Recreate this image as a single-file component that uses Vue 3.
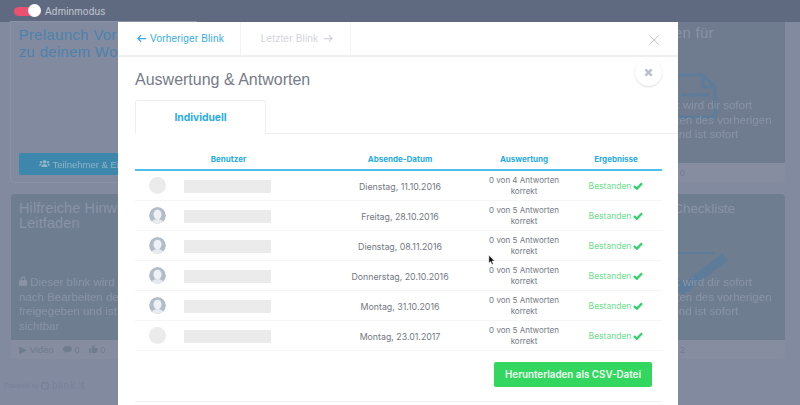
<template>
  <div class="page">
    <div class="backdrop">
      <header class="topbar">
        <span class="toggle"><span class="toggle__knob"></span></span>
        <span class="topbar__label">Adminmodus</span>
      </header>

      <main class="board">
        <article class="card card--plain">
          <h2 class="card__title card__title--blue">Prelaunch Vorbereitung<br />zu deinem Workshop</h2>
          <button type="button" class="card__cta">
            <svg viewBox="0 0 16 12" width="11" height="9" fill="currentColor"><circle cx="8" cy="3.4" r="2.6" /><circle cx="3" cy="4" r="1.8" /><circle cx="13" cy="4" r="1.8" /><path d="M3.6 11c0-3 2-4.4 4.4-4.4s4.4 1.4 4.4 4.4zM0 9.4C0 7.600 1.200 6.500 3 6.500l.8.2C2.800 7.600 2.500 8.500 2.400 9.400zM16 9.400c0-1.800-1.200-2.900-3-2.900l-.8.2c1 .9 1.300 1.800 1.400 2.700z" /></svg>
            Teilnehmer &amp; Einstellungen
          </button>
        </article>
        <article v-for="n in 2" :key="n" class="card card--image"><div class="card__media"></div><div class="card__foot"></div></article>
        <article class="card card--image">
          <div class="card__media">
            <h2 class="card__title">Zielgruppen für</h2>
            <svg class="card__art card__art--doc" viewBox="0 0 44 46" fill="none" stroke="#5c7c9a" stroke-width="3">
              <path d="M2 2h28l12 12v30H2zM30 2v12h12M8 22h28" />
            </svg>
            <p class="card__text card__text--top">
              <svg viewBox="0 0 10 12" width="8" height="10" fill="currentColor"><path d="M1 5h1V3.500a3 3 0 0 1 6 0V5h1a1 1 0 0 1 1 1v5a1 1 0 0 1-1 1H1a1 1 0 0 1-1-1V6a1 1 0 0 1 1-1zm2.500 0h3V3.500a1.500 1.500 0 0 0-3 0z" /></svg>
              Dieser blink wird dir sofort<br />nach Bearbeiten des vorherigen<br />freigegeben und ist sofort
            </p>
          </div>
          <div class="card__foot card__foot--meta"><span class="meta__push">0</span></div>
        </article>

        <article class="card card--image">
          <div class="card__media card__media--tall">
            <h2 class="card__title card__title--left">Hilfreiche Hinweise<br />Leitfaden</h2>
            <p class="card__text">
              <svg viewBox="0 0 10 12" width="8" height="10" fill="currentColor"><path d="M1 5h1V3.500a3 3 0 0 1 6 0V5h1a1 1 0 0 1 1 1v5a1 1 0 0 1-1 1H1a1 1 0 0 1-1-1V6a1 1 0 0 1 1-1zm2.500 0h3V3.500a1.500 1.500 0 0 0-3 0z" /></svg>
              Dieser blink wird dir sofort<br />nach Bearbeiten des vorherigen<br />freigegeben und ist sofort<br />sichtbar
            </p>
          </div>
          <div class="card__foot card__foot--meta">
            <span>▶ Video</span>
            <span>
              <svg viewBox="0 0 10 8" width="9" height="7" fill="currentColor"><ellipse cx="5" cy="3.500" rx="5" ry="3.500" /><path d="M2 5L1 8l3-2z" /></svg>
              0
            </span>
            <span>
              <svg viewBox="0 0 10 9" width="9" height="8" fill="currentColor"><path d="M0 4h2v5H0zM3 4l2-4c1 0 1.500 .7 1.200 1.700L5.800 3.500H9c.7 0 1 .6 .8 1.200L8.600 8.400c-.1 .4-.4 .6-.8 .6H3z" /></svg>
              0
            </span>
          </div>
        </article>
        <article v-for="n in 2" :key="`mid-${n}`" class="card card--image"><div class="card__media card__media--tall"></div><div class="card__foot"></div></article>
        <article class="card card--image">
          <div class="card__media card__media--tall">
            <h2 class="card__title card__title--right">Deine 100 Checkliste</h2>
            <svg class="card__art card__art--check" viewBox="0 0 72 44" fill="none" stroke="#5c7c9a">
              <path d="M12 2h46" stroke-width="2" />
              <path d="M8 20l18 18L68 6" stroke-width="9" />
            </svg>
            <p class="card__text">
              <svg viewBox="0 0 10 12" width="8" height="10" fill="currentColor"><path d="M1 5h1V3.500a3 3 0 0 1 6 0V5h1a1 1 0 0 1 1 1v5a1 1 0 0 1-1 1H1a1 1 0 0 1-1-1V6a1 1 0 0 1 1-1zm2.500 0h3V3.500a1.500 1.500 0 0 0-3 0z" /></svg>
              Dieser blink wird dir sofort<br />nach Bearbeiten des vorherigen<br />freigegeben und ist sofort
            </p>
          </div>
          <div class="card__foot card__foot--meta"><span class="meta__push">2</span></div>
        </article>
      </main>

      <footer class="powered">
        Powered by
        <svg viewBox="0 0 10 10" width="8" height="8" fill="none" stroke="currentColor" stroke-width="2"><rect x="1" y="1" width="8" height="8" rx="2" /></svg>
        <b>blink.it</b>
      </footer>
    </div>

    <section class="modal" role="dialog" aria-modal="true">
      <nav class="modal__nav">
        <a class="nav-link nav-link--active">
          <svg viewBox="0 0 12 10" width="10" height="9" fill="none" stroke="currentColor" stroke-width="1.500"><path d="M11 5H1.500M5 1L1 5l4 4" /></svg>
          Vorheriger Blink
        </a>
        <a class="nav-link">
          Letzter Blink
          <svg viewBox="0 0 12 10" width="10" height="9" fill="none" stroke="currentColor" stroke-width="1.500"><path d="M1 5h9.500M7 1l4 4-4 4" /></svg>
        </a>
        <svg class="modal__close" viewBox="0 0 10 10" width="10" height="10" fill="none" stroke="currentColor" stroke-width="0.900"><path d="M.5.5l9 9M9.500.5l-9 9" /></svg>
      </nav>

      <div class="modal__body">
        <h1 class="modal__title">Auswertung &amp; Antworten</h1>
        <button type="button" class="round-close" aria-label="Schließen">
          <svg viewBox="0 0 10 10" width="9" height="9" fill="none" stroke="currentColor" stroke-width="3"><path d="M1.500 1.500l7 7M8.500 1.500l-7 7" /></svg>
        </button>

        <div class="tabs"><div class="tab">Individuell</div></div>

        <div class="results">
          <div class="results__row results__row--head">
            <span>Benutzer</span>
            <span>Absende-Datum</span>
            <span>Auswertung</span>
            <span>Ergebnisse</span>
          </div>
          <div v-for="row in rows" :key="row.date" class="results__row">
            <div class="user">
              <span v-if="!row.photo" class="avatar avatar--empty"></span>
              <svg v-else class="avatar" viewBox="0 0 17 17">
                <circle cx="8.500" cy="8.500" r="8.500" fill="#b3bdc8" />
                <ellipse cx="8.500" cy="7.500" rx="4" ry="4.800" fill="#eef0f3" />
                <path d="M2.800 15c1-2.300 3.300-3 5.700-3s4.700.7 5.700 3a8.500 8.500 0 0 1-11.400 0z" fill="#e7eaee" />
              </svg>
              <span class="user__name"></span>
            </div>
            <span>{{ row.date }}</span>
            <span class="score">0 von {{ row.total }} Antworten korrekt</span>
            <span class="passed">
              Bestanden
              <svg viewBox="0 0 12 10" width="10" height="8" fill="none" stroke="#2ed463" stroke-width="2.800"><path d="M1 5l3.500 3.500L11 1.500" /></svg>
            </span>
          </div>
        </div>

        <div class="modal__actions">
          <button type="button" class="download">Herunterladen als CSV-Datei</button>
        </div>
      </div>
    </section>

    <svg class="cursor" viewBox="0 0 8 12" width="7" height="11"><path d="M1 0v9l2-2 1.500 3.500 1.500-.6L4.500 6.500H7.500z" fill="#111" stroke="#fff" stroke-width="0.500" /></svg>
  </div>
</template>

<script setup>
const rows = [
  { date: 'Dienstag, 11.10.2016', total: 4, photo: false },
  { date: 'Freitag, 28.10.2016', total: 5, photo: true },
  { date: 'Dienstag, 08.11.2016', total: 5, photo: true },
  { date: 'Donnerstag, 20.10.2016', total: 5, photo: true },
  { date: 'Montag, 31.10.2016', total: 5, photo: true },
  { date: 'Montag, 23.01.2017', total: 5, photo: false },
]
</script>

<style>
html,
body {
  margin: 0;
  height: 100%;
  overflow: hidden;
  background: #818a9e;
}
</style>

<style scoped>
.page {
  position: relative;
  width: 800px;
  height: 405px;
  overflow: hidden;
  background: #818a9e;
  font-family: 'Liberation Sans', Arial, sans-serif;
}

.backdrop {
  filter: blur(0.7px);
}

.topbar {
  height: 22px;
  display: flex;
  align-items: center;
  gap: 4px;
  padding-left: 14px;
  background: #5f6a80;
  color: #c3c8d2;
  font-size: 10px;
  letter-spacing: 0.2px;
}

.toggle {
  width: 27px;
  height: 9px;
  border-radius: 5px;
  background: #ec5070;
  position: relative;
}

.toggle__knob {
  position: absolute;
  right: 0;
  top: -2.500px;
  width: 13px;
  height: 13px;
  border-radius: 50%;
  background: #fff;
}

.board {
  display: grid;
  grid-template-columns: repeat(4, 184.500px);
  gap: 12px;
  padding: 0 15px 0 11px;
}

.card {
  display: flex;
  flex-direction: column;
  border-radius: 0 0 4px 4px;
  overflow: hidden;
}

.card--plain {
  height: 160px;
  box-sizing: border-box;
  padding: 3px 8px 7px;
  justify-content: space-between;
  background: #828a9f;
  box-shadow: 0 0 0 1px #8a92a6;
}

.card__media {
  position: relative;
  height: 141px;
  box-sizing: border-box;
  padding: 3px 8px;
  background: #6f7b8f;
}

.card__media--tall {
  height: 146px;
  border-radius: 4px 4px 0 0;
  padding-top: 7px;
  background: #6f7d91;
}

.card__foot {
  height: 19px;
  box-sizing: border-box;
  display: flex;
  align-items: center;
  gap: 9px;
  padding-left: 8px;
  background: #868da1;
}

.card__foot--meta {
  font-size: 9.500px;
  color: #6f7b8f;
}

.meta__push {
  margin-left: auto;
  padding-right: 100px;
}

.card__title {
  margin: 0;
  font-size: 15px;
  font-weight: 400;
  line-height: 15px;
  letter-spacing: 0.3px;
  white-space: nowrap;
  color: #8994a5;
}

.card__title--blue {
  color: #4a82ad;
  padding-top: 1px;
  line-height: 17px;
}

.card__title--left {
  font-size: 14.500px;
  letter-spacing: 0.1px;
}

.card__title--right {
  font-size: 13.400px;
  letter-spacing: 0;
}

.card__cta {
  height: 22px;
  width: 100%;
  border: none;
  border-radius: 2px;
  background: #3e87ac;
  color: #8fb4c8;
  font: 9.500px 'Liberation Sans', Arial, sans-serif;
  text-align: center;
  white-space: nowrap;
}

.card__text {
  position: absolute;
  left: 8px;
  top: 81px;
  margin: 0;
  font-size: 11.500px;
  line-height: 14.500px;
  white-space: nowrap;
  color: #8994a5;
}

.card__text--top {
  top: 76px;
}

.card__art {
  position: absolute;
}

.card__art--doc {
  left: 72px;
  top: 51px;
  width: 44px;
  height: 46px;
}

.card__art--check {
  left: 56px;
  top: 57px;
  width: 72px;
  height: 44px;
}

.powered {
  display: flex;
  align-items: center;
  gap: 3px;
  padding: 21px 0 0 4px;
  font-size: 6.500px;
  color: #78819a;
}

.powered b {
  font-size: 10px;
  font-weight: 400;
  letter-spacing: 0.5px;
}

.modal {
  position: absolute;
  left: 118px;
  top: 22px;
  width: 560px;
  height: 400px;
  background: #fff;
}

.modal__nav {
  position: relative;
  height: 33px;
  display: flex;
  border-bottom: 2px solid #eeeff0;
}

.nav-link {
  display: flex;
  align-items: center;
  justify-content: center;
  gap: 5px;
  box-sizing: border-box;
  width: 110px;
  padding-left: 3px;
  border-right: 1px solid #f2f3f4;
  font-size: 10px;
  letter-spacing: 0.2px;
  color: #d2d4d9;
}

.nav-link--active {
  width: 123px;
  gap: 3px;
  color: #35ace4;
}

.modal__close {
  position: absolute;
  right: 19px;
  top: 13px;
  color: #b9bec6;
}

.modal__body {
  position: relative;
  padding: 14px 16px 0 17px;
}

.modal__title {
  margin: 0;
  font-size: 16px;
  line-height: 18px;
  font-weight: 400;
  color: #777b88;
}

.round-close {
  position: absolute;
  right: 16.500px;
  top: 1.500px;
  width: 27px;
  height: 27px;
  display: grid;
  place-items: center;
  padding: 0;
  border: none;
  border-radius: 50%;
  background: #fff;
  color: #bcc1c9;
  box-shadow: 0 1px 2px rgba(0, 0, 0, 0.14);
}

.tabs {
  margin: 11px -16px 0 0;
  display: flex;
  border-bottom: 1px solid #eeeff0;
}

.tab {
  width: 131px;
  height: 34px;
  margin-bottom: -1px;
  box-sizing: border-box;
  display: grid;
  place-items: center;
  border: 1px solid #eeeff0;
  border-bottom-color: #fff;
  border-radius: 3px 3px 0 0;
  font-family: Inter, 'Liberation Sans', sans-serif;
  font-size: 10.300px;
  font-weight: 700;
  color: #29abe2;
}

.results {
  margin-top: 19px;
  font-family: Inter, 'Liberation Sans', sans-serif;
  font-size: 8.800px;
  color: #74787f;
}

.results__row {
  display: grid;
  grid-template-columns: 187px 156px 92px 92px;
  align-items: center;
  height: 30px;
  box-sizing: border-box;
  padding-top: 1px;
  text-align: center;
  border-bottom: 1px solid #f5f5f6;
}

.results__row--head {
  height: 18px;
  align-items: start;
  border-bottom: 2px solid #4dc0f0;
  color: #29abe2;
  font-size: 8px;
  line-height: 11px;
  font-weight: 700;
}

.user {
  display: flex;
  align-items: center;
  gap: 18px;
  padding-left: 14px;
}

.avatar {
  display: block;
  flex: none;
  width: 17px;
  height: 17px;
  margin-top: -2px;
  border-radius: 50%;
}

.avatar--empty {
  background: #ebebec;
}

.user__name {
  width: 87px;
  height: 13px;
  background: #ebebeb;
}

.score {
  font-size: 8px;
  line-height: 11.500px;
}

.passed {
  display: flex;
  align-items: center;
  justify-content: center;
  gap: 2px;
  font-size: 8.500px;
  color: #6fe08f;
}

.modal__actions {
  display: flex;
  justify-content: flex-end;
  padding: 11px 10px 14px 0;
  border-bottom: 1px solid #f0f0f1;
}

.download {
  width: 158px;
  height: 25px;
  padding: 0;
  border: none;
  border-radius: 2px;
  background: #33d65f;
  color: #f2fdf5;
  font-family: Inter, 'Liberation Sans', sans-serif;
  font-size: 9.800px;
  font-weight: 600;
}

.cursor {
  position: absolute;
  left: 488px;
  top: 255px;
}
</style>
